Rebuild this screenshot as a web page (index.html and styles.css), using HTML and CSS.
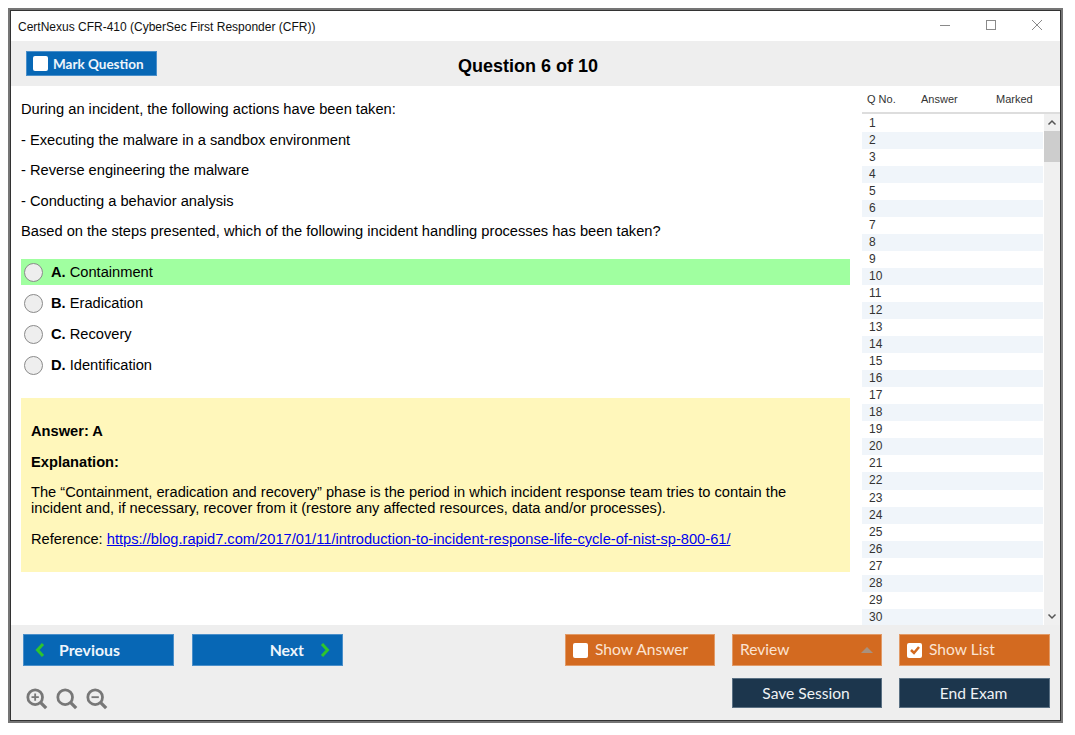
FILE: index.html
```html
<!DOCTYPE html>
<html lang="en">
<head>
<meta charset="utf-8">
<title>CertNexus CFR-410</title>
<link rel="stylesheet" href="styles.css">
</head>
<body>
<div class="window">
  <div class="inner">
    <header class="titlebar">
      <span class="title">CertNexus CFR-410 (CyberSec First Responder (CFR))</span>
      <div class="winctl">
        <svg class="ctl" width="12" height="12" viewBox="0 0 12 12"><path d="M1 6.5H11" stroke="#8a8a8a" fill="none"/></svg>
        <svg class="ctl" width="12" height="12" viewBox="0 0 12 12"><rect x="1.5" y="1.5" width="9" height="9" stroke="#8a8a8a" fill="none"/></svg>
        <svg class="ctl" width="12" height="12" viewBox="0 0 12 12"><path d="M1 1L11 11M11 1L1 11" stroke="#8a8a8a" fill="none"/></svg>
      </div>
    </header>
    <div class="toolbar">
      <button class="btn btn-blue btn-mark"><span class="check"></span>Mark Question</button>
      <h1 class="qtitle">Question 6 of 10</h1>
    </div>
    <div class="main">
      <section class="question">
        <p class="line">During an incident, the following actions have been taken:</p>
        <p class="line">- Executing the malware in a sandbox environment</p>
        <p class="line">- Reverse engineering the malware</p>
        <p class="line">- Conducting a behavior analysis</p>
        <p class="line">Based on the steps presented, which of the following incident handling processes has been taken?</p>
        <div class="options">
          <div class="option correct"><span class="radio"></span><span><b>A.</b> Containment</span></div>
          <div class="option"><span class="radio"></span><span><b>B.</b> Eradication</span></div>
          <div class="option"><span class="radio"></span><span><b>C.</b> Recovery</span></div>
          <div class="option"><span class="radio"></span><span><b>D.</b> Identification</span></div>
        </div>
        <div class="answer">
          <p class="a-head"><b>Answer: A</b></p>
          <p class="a-head a-head-last"><b>Explanation:</b></p>
          <p class="a-text">The “Containment, eradication and recovery” phase is the period in which incident response team tries to contain the incident and, if necessary, recover from it (restore any affected resources, data and/or processes).</p>
          <p class="a-ref">Reference: <a href="#">https://blog.rapid7.com/2017/01/11/introduction-to-incident-response-life-cycle-of-nist-sp-800-61/</a></p>
        </div>
      </section>
      <aside class="side">
        <div class="side-head"><span class="c1">Q No.</span><span class="c2">Answer</span><span class="c3">Marked</span></div>
        <div class="side-body">
          <ol class="rows">
            <li>1</li><li>2</li><li>3</li><li>4</li><li>5</li><li>6</li><li>7</li><li>8</li><li>9</li><li>10</li>
            <li>11</li><li>12</li><li>13</li><li>14</li><li>15</li><li>16</li><li>17</li><li>18</li><li>19</li><li>20</li>
            <li>21</li><li>22</li><li>23</li><li>24</li><li>25</li><li>26</li><li>27</li><li>28</li><li>29</li><li>30</li>
          </ol>
          <div class="scroll">
            <svg class="arrow" width="16" height="16" viewBox="0 0 16 16"><path d="M4.5 9.5L8 6L11.500 9.500" stroke="#555" stroke-width="1.500" fill="none"/></svg>
            <div class="thumb"></div>
            <svg class="arrow arrow-down" width="16" height="16" viewBox="0 0 16 16"><path d="M4.5 6.500L8 10L11.500 6.500" stroke="#555" stroke-width="1.500" fill="none"/></svg>
          </div>
        </div>
      </aside>
    </div>
    <footer class="footer">
      <div class="left">
        <div class="nav">
          <button class="btn btn-blue btn-prev"><svg width="12" height="16" viewBox="0 0 12 16"><path d="M9 2L3.500 8L9 14" stroke="#2ec52e" stroke-width="3" fill="none"/></svg><span class="lbl">Previous</span></button>
          <button class="btn btn-blue btn-next"><span class="lbl">Next</span><svg width="12" height="16" viewBox="0 0 12 16"><path d="M3 2L8.500 8L3 14" stroke="#2ec52e" stroke-width="3" fill="none"/></svg></button>
        </div>
        <div class="zoom">
          <svg width="22" height="22" viewBox="0 0 24 24"><circle cx="10" cy="10" r="8" stroke="#777" stroke-width="3" fill="none"/><path d="M16 16L22 22" stroke="#777" stroke-width="3.500" fill="none"/><path d="M6 10H14M10 6V14" stroke="#777" stroke-width="2" fill="none"/></svg>
          <svg width="22" height="22" viewBox="0 0 24 24"><circle cx="10" cy="10" r="8" stroke="#777" stroke-width="3" fill="none"/><path d="M16 16L22 22" stroke="#777" stroke-width="3.500" fill="none"/></svg>
          <svg width="22" height="22" viewBox="0 0 24 24"><circle cx="10" cy="10" r="8" stroke="#777" stroke-width="3" fill="none"/><path d="M16 16L22 22" stroke="#777" stroke-width="3.500" fill="none"/><path d="M6 10H14" stroke="#777" stroke-width="2" fill="none"/></svg>
        </div>
      </div>
      <div class="actions">
        <button class="btn btn-orange"><span class="check"></span><span class="lbl">Show Answer</span></button>
        <button class="btn btn-orange btn-review"><span class="lbl">Review</span><span class="caret"></span></button>
        <button class="btn btn-orange"><span class="check"><svg width="14" height="14" viewBox="0 0 14 14"><path d="M3 7L6 10L11 4" stroke="#d2691f" stroke-width="2.500" fill="none"/></svg></span><span class="lbl">Show List</span></button>
        <button class="btn btn-navy col2">Save Session</button>
        <button class="btn btn-navy">End Exam</button>
      </div>
    </footer>
  </div>
</div>
</body>
</html>
```
FILE: styles.css
```css
* { box-sizing: border-box; }
html, body { margin: 0; padding: 0; background: #fff; }
body { padding: 8px 0 0 8px; font-family: "Liberation Sans", Arial, sans-serif; color: #000; }
.window { width: 1055px; height: 715px; border: 2px solid #757575; }
.inner { height: 100%; border: 1px solid #333; display: flex; flex-direction: column; background: #fff; }

.titlebar { height: 30px; flex: none; display: flex; align-items: center; justify-content: space-between; padding: 2px 17px 0 7px; }
.title { font-size: 12px; color: #111; }
.winctl { display: flex; gap: 34px; padding-bottom: 4px; }
.ctl { display: block; }

.toolbar { height: 45px; flex: none; background: #eee; display: flex; align-items: flex-start; padding: 10px 0 0 15px; }
.qtitle { margin: 3px 0 0 301px; font-size: 18px; line-height: 24px; font-weight: 700; }

.btn { display: flex; align-items: center; padding: 0; margin: 0; font-family: Lato, "Open Sans", sans-serif; cursor: pointer; }
.btn-blue { background: #0767b5; border: 1px solid #4a8fca; color: #eef5fb; font-weight: 700; font-size: 14.500px; }
.btn-orange { background: #d36a20; border: 1px solid #e29a66; color: #fbe3d2; font-size: 15.600px; height: 32px; padding-left: 7px; }
.btn-navy { background: #1c364d; border: 1px solid #5a7083; color: #eef2f5; font-size: 15.600px; height: 30px; justify-content: center; padding-right: 2px; }
.lbl { position: relative; top: -1px; }
.check { width: 15px; height: 15px; background: #fff; border-radius: 2px; flex: none; margin-right: 7px; display: flex; align-items: center; justify-content: center; }
.check svg { display: block; }
.btn-mark { width: 131px; height: 25px; padding-left: 6px; font-size: 13.500px; }
.btn-mark .check { margin-right: 5px; }

.main { flex: 1; display: flex; min-height: 0; }
.question { flex: 1; min-width: 0; padding: 8px 12px 0 10px; }
.line { margin: 0; font-size: 14.667px; line-height: 20px; padding: 5px 0 5.500px; }
.options { margin-top: 12.500px; display: flex; flex-direction: column; gap: 5px; }
.option { height: 26px; display: flex; align-items: center; padding-left: 3px; font-size: 14.667px; gap: 8px; }
.option.correct { background: #a0ffa0; }
.radio { width: 19px; height: 19px; border-radius: 50%; background: #eee; border: 1px solid #8a8a8a; flex: none; }
.answer { margin-top: 20px; background: #fff7bb; height: 174px; padding: 25px 20px 0 10px; font-size: 14.667px; }
.answer p { margin: 0; }
.answer .a-head { line-height: 17px; margin-bottom: 14px; }
.answer .a-head-last { margin-bottom: 13px; }
.answer .a-text { line-height: 16px; margin-bottom: 15px; }
.a-ref { line-height: 17px; white-space: nowrap; }
.a-ref a { color: #00e; }

.side { width: 198px; flex: none; display: flex; flex-direction: column; margin-top: 1px; }
.side-head { height: 27px; flex: none; display: flex; align-items: center; font-size: 11px; color: #333; border-bottom: 2px solid #ddd; padding-bottom: 2px; }
.c1 { margin-left: 5px; width: 54px; }
.c2 { width: 75px; }
.side-body { flex: 1; min-height: 0; display: flex; overflow: hidden; }
.rows { list-style: none; margin: 0 1px 0 0; padding: 0.500px 0 0; width: 181px; flex: none; overflow: hidden; }
.rows li { height: 17.050px; font-size: 12px; line-height: 17px; padding-left: 7px; color: #333; }
.rows li:last-child { height: 16px; line-height: 16px; }
.rows li:nth-child(even) { background: #f0f5fa; }
.scroll { flex: 1; background: #f0f0f0; display: flex; flex-direction: column; }
.arrow { display: block; flex: none; margin-top: 1px; }
.arrow-down { margin-bottom: 1px; }
.thumb { height: 31px; background: #cdcdcd; margin-bottom: auto; }

.footer { height: 95px; flex: none; background: #eee; display: flex; justify-content: space-between; padding: 9px 10px 0 12px; }
.left { display: flex; flex-direction: column; }
.nav { display: flex; gap: 18px; }
.nav .btn { width: 151px; height: 32px; font-size: 15.800px; }
.btn-prev { padding-left: 10px; gap: 13px; }
.btn-next { justify-content: flex-end; padding-right: 11px; gap: 15px; }
.zoom { display: flex; gap: 8px; margin: 22px 0 0 3px; }
.zoom svg { display: block; }
.actions { display: grid; grid-template-columns: 150px 150px 151px; grid-auto-rows: auto; column-gap: 17px; row-gap: 12px; align-content: start; }
.col2 { grid-column: 2; }
.btn-review { justify-content: space-between; padding-right: 8px; }
.caret { width: 0; height: 0; border-left: 6px solid transparent; border-right: 6px solid transparent; border-bottom: 6px solid #a8917f; }
```
